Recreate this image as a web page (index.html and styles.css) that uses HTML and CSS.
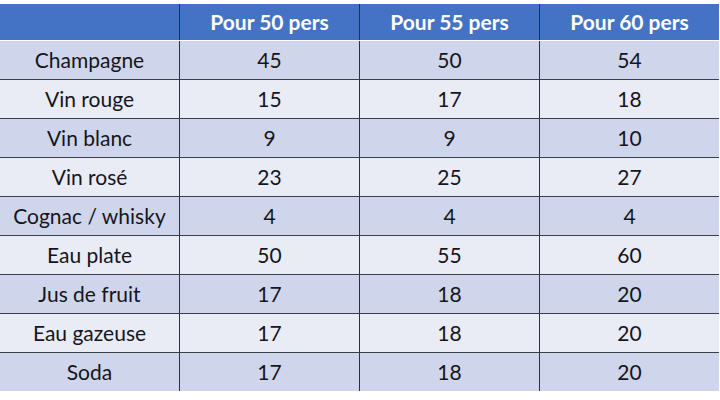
FILE: index.html
```
<!DOCTYPE html>
<html>
<head>
<meta charset="utf-8">
<link rel="stylesheet" href="styles.css">
</head>
<body>
<table class="boissons">
  <thead>
    <tr><th></th><th>Pour 50 pers</th><th>Pour 55 pers</th><th>Pour 60 pers</th></tr>
  </thead>
  <tbody>
    <tr class="dark"><td>Champagne</td><td>45</td><td>50</td><td>54</td></tr>
    <tr class="light"><td>Vin rouge</td><td>15</td><td>17</td><td>18</td></tr>
    <tr class="dark"><td>Vin blanc</td><td>9</td><td>9</td><td>10</td></tr>
    <tr class="light"><td>Vin rosé</td><td>23</td><td>25</td><td>27</td></tr>
    <tr class="dark"><td>Cognac / whisky</td><td>4</td><td>4</td><td>4</td></tr>
    <tr class="light"><td>Eau plate</td><td>50</td><td>55</td><td>60</td></tr>
    <tr class="dark"><td>Jus de fruit</td><td>17</td><td>18</td><td>20</td></tr>
    <tr class="light"><td>Eau gazeuse</td><td>17</td><td>18</td><td>20</td></tr>
    <tr class="dark"><td>Soda</td><td>17</td><td>18</td><td>20</td></tr>
  </tbody>
</table>
</body>
</html>
```
FILE: styles.css
```
html, body {
  margin: 0;
  padding: 0;
  background: #ffffff;
}
body {
  padding-top: 4px;
}
.boissons {
  border-collapse: collapse;
  table-layout: fixed;
  width: 717px;
  font-family: Lato, "Open Sans", sans-serif;
  font-size: 21px;
  line-height: 24px;
  color: #15161c;
}
.boissons th,
.boissons td {
  width: 179px;
  padding: 0;
  text-align: center;
  vertical-align: middle;
}
.boissons th {
  height: 36px;
  background: #4472c4;
  color: #ffffff;
  font-weight: bold;
  border-bottom: 1px solid #ffffff;
}
.boissons td {
  height: 38px;
  border-bottom: 1px solid #3a3e48;
}
.boissons tbody tr:last-child td {
  border-bottom: none;
}
.boissons th + th,
.boissons td + td {
  border-left: 1px solid #2a3040;
}
.boissons tr.dark td {
  background: #cfd5ea;
}
.boissons tr.light td {
  background: #e9ebf5;
}
```
